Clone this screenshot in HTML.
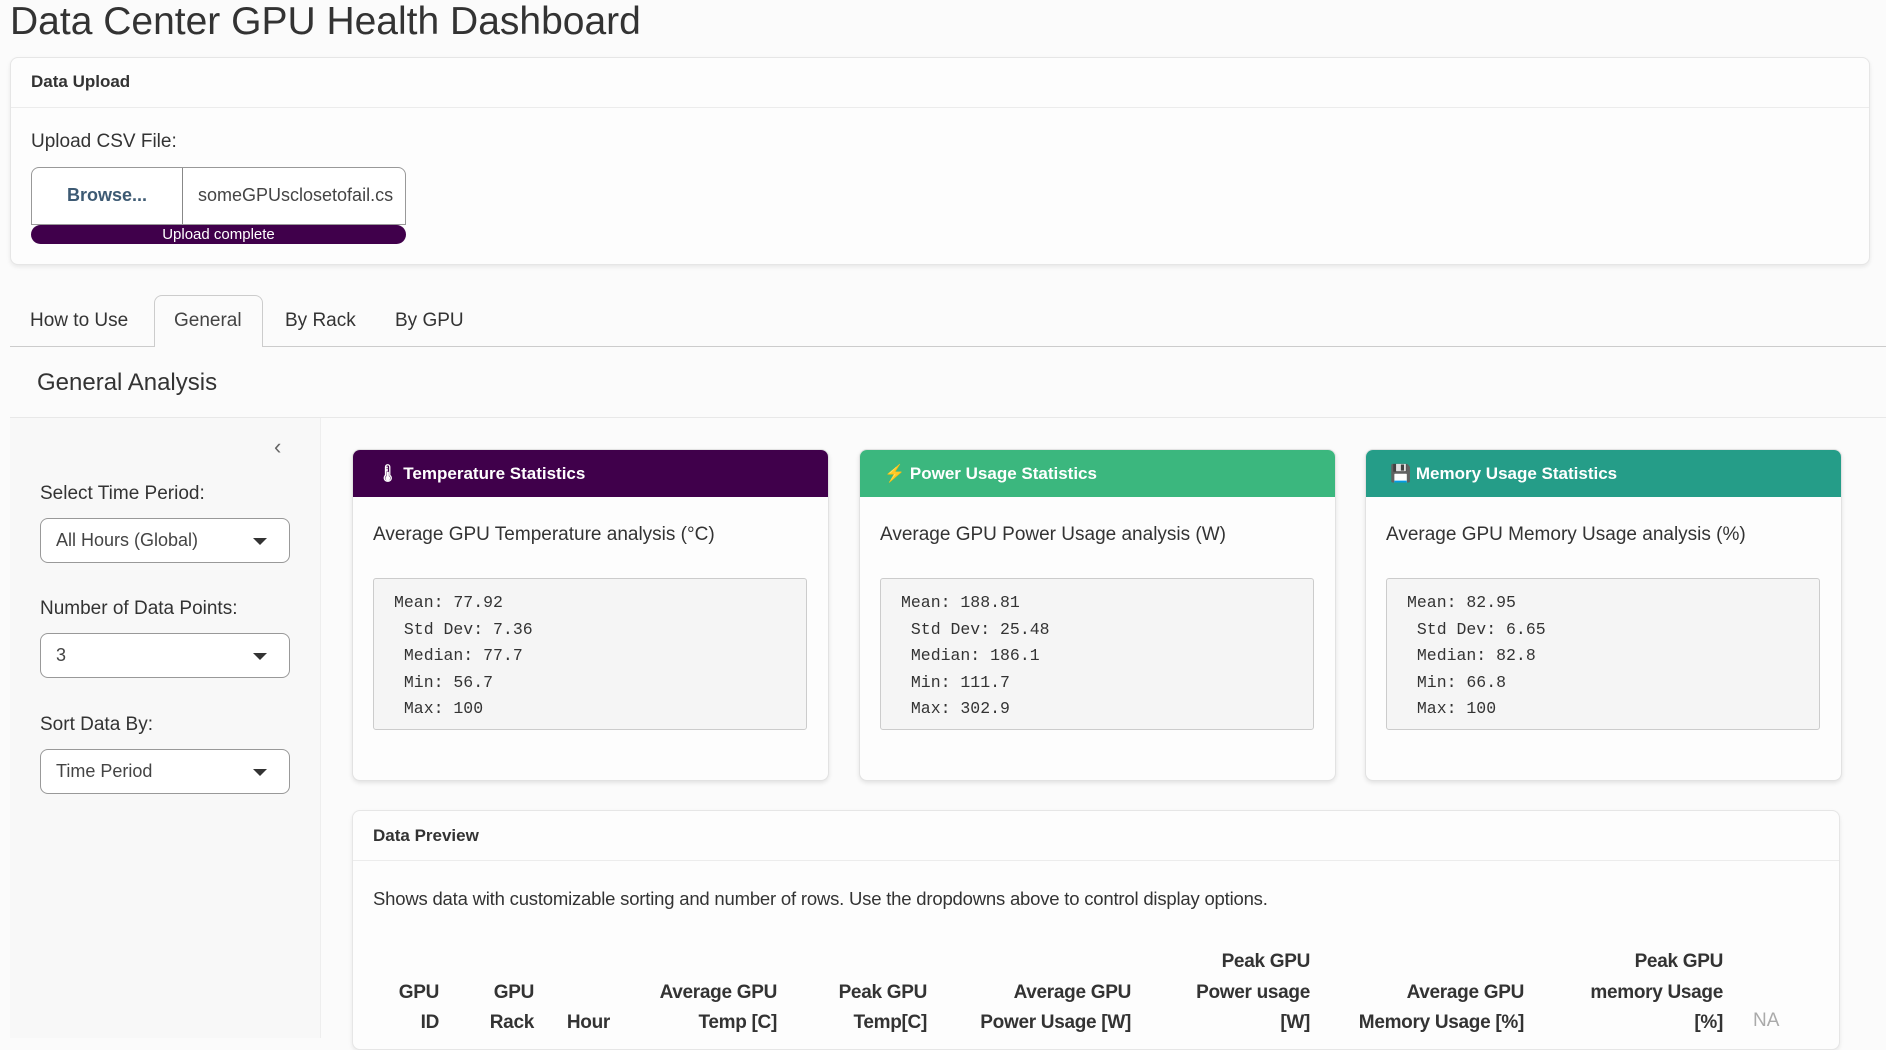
<!DOCTYPE html>
<html><head><meta charset="utf-8"><style>
*{box-sizing:border-box;margin:0;padding:0}
body{width:1886px;height:1036px;overflow:hidden;background:#fbfbfb;font-family:"Liberation Sans",sans-serif;color:#333;position:relative}
.a{position:absolute;white-space:nowrap}
.card{position:absolute;background:#fdfdfd;border:1px solid #e6e6e6;border-radius:8px;box-shadow:0 2px 4px rgba(0,0,0,.08)}
.sel{position:absolute;left:40px;width:250px;height:45px;border:1px solid #999;border-radius:8px;background:#fff;font-size:18px;padding:11px 0 0 15px;color:#444}
.sel:after{content:"";position:absolute;right:22px;top:19px;border-left:7px solid transparent;border-right:7px solid transparent;border-top:7px solid #333}
.lbl{font-size:19px;color:#333}
.st{position:absolute;width:477px;height:332px;background:#fdfdfd;border:1px solid #e2e2e2;border-radius:8px;box-shadow:0 2px 4px rgba(0,0,0,.1);overflow:hidden}
.st .h{height:47px;color:#fff;font-weight:bold;font-size:17px;padding:14px 0 0 24px}
.st .sub{position:absolute;left:20px;top:74px;font-size:19px;color:#333}
.st pre{position:absolute;left:20px;top:128px;width:434px;height:152px;background:#f5f5f5;border:1px solid #ccc;border-radius:3px;font-family:"Liberation Mono",monospace;font-size:16.5px;line-height:26.5px;padding:11px 20px;color:#333}
.th{position:absolute;font-weight:bold;font-size:19px;color:#333;text-align:right;line-height:30.5px;top:947px;letter-spacing:-0.3px}
</style></head><body>
<div class="a" style="left:10px;top:0px;font-size:39px;color:#333">Data Center GPU Health Dashboard</div>

<div class="card" style="left:10px;top:57px;width:1860px;height:208px">
 <div class="a" style="left:20px;top:14px;font-size:17px;font-weight:bold">Data Upload</div>
 <div style="position:absolute;left:0;right:0;top:49px;border-top:1px solid #ececec"></div>
 <div class="a" style="left:20px;top:73px;font-size:19px">Upload CSV File:</div>
 <div style="position:absolute;left:20px;top:109px;width:375px;height:58px;border:1px solid #999;border-radius:8px 8px 0 0;background:#fff">
  <div style="position:absolute;left:0;top:0;width:151px;height:56px;border-right:1px solid #888;font-weight:bold;font-size:18px;color:#3d5a73;text-align:center;padding-top:17px">Browse...</div>
  <div class="a" style="left:166px;top:17px;font-size:18px;color:#444">someGPUsclosetofail.cs</div>
 </div>
 <div style="position:absolute;left:20px;top:167px;width:375px;height:19px;background:#40004b;border-radius:10px;color:#fff;font-size:15px;text-align:center;line-height:19px">Upload complete</div>
</div>

<div style="position:absolute;left:10px;right:0;top:346px;border-top:1px solid #ccc"></div>
<div style="position:absolute;left:154px;top:295px;width:109px;height:52px;border:1px solid #ccc;border-bottom:none;border-radius:8px 8px 0 0;background:#fbfbfb"></div>
<div class="a" style="left:30px;top:310px;font-size:19px;color:#333">How to Use</div>
<div class="a" style="left:174px;top:310px;font-size:19px;color:#444">General</div>
<div class="a" style="left:285px;top:310px;font-size:19px;color:#333">By Rack</div>
<div class="a" style="left:395px;top:310px;font-size:19px;color:#333">By GPU</div>

<div class="a" style="left:37px;top:369px;font-size:24px;color:#333">General Analysis</div>
<div style="position:absolute;left:10px;right:0;top:417px;border-top:1px solid #e8e8e8"></div>

<div style="position:absolute;left:10px;top:418px;width:311px;height:620px;background:#f8f8f8;border-right:1px solid #eee"></div>
<div class="a" style="left:274px;top:434px;font-size:22px;color:#666">&#8249;</div>
<div class="a lbl" style="left:40px;top:483px">Select Time Period:</div>
<div class="sel" style="top:518px">All Hours (Global)</div>
<div class="a lbl" style="left:40px;top:598px">Number of Data Points:</div>
<div class="sel" style="top:633px">3</div>
<div class="a lbl" style="left:40px;top:714px">Sort Data By:</div>
<div class="sel" style="top:749px">Time Period</div>

<div class="st" style="left:352px;top:449px"><div class="h" style="background:#40004b">🌡 Temperature Statistics</div>
<div class="sub">Average GPU Temperature analysis (°C)</div>
<pre>Mean: 77.92
 Std Dev: 7.36
 Median: 77.7
 Min: 56.7
 Max: 100</pre></div>
<div class="st" style="left:859px;top:449px"><div class="h" style="background:#3bb77e">⚡ Power Usage Statistics</div>
<div class="sub">Average GPU Power Usage analysis (W)</div>
<pre>Mean: 188.81
 Std Dev: 25.48
 Median: 186.1
 Min: 111.7
 Max: 302.9</pre></div>
<div class="st" style="left:1365px;top:449px"><div class="h" style="background:#259d88">💾 Memory Usage Statistics</div>
<div class="sub">Average GPU Memory Usage analysis (%)</div>
<pre>Mean: 82.95
 Std Dev: 6.65
 Median: 82.8
 Min: 66.8
 Max: 100</pre></div>

<div class="card" style="left:352px;top:810px;width:1488px;height:240px">
 <div class="a" style="left:20px;top:15px;font-size:17px;font-weight:bold">Data Preview</div>
 <div style="position:absolute;left:0;right:0;top:49px;border-top:1px solid #ececec"></div>
 <div class="a" style="left:20px;top:77px;font-size:18.5px;letter-spacing:-0.2px">Shows data with customizable sorting and number of rows. Use the dropdowns above to control display options.</div>
</div>

<div class="th" style="right:1447px"><br>GPU<br>ID</div>
<div class="th" style="right:1352px"><br>GPU<br>Rack</div>
<div class="th" style="right:1276px"><br><br>Hour</div>
<div class="th" style="right:1109px"><br>Average GPU<br>Temp [C]</div>
<div class="th" style="right:959px"><br>Peak GPU<br>Temp[C]</div>
<div class="th" style="right:755px"><br>Average GPU<br>Power Usage [W]</div>
<div class="th" style="right:576px">Peak GPU<br>Power usage<br>[W]</div>
<div class="th" style="right:362px"><br>Average GPU<br>Memory Usage [%]</div>
<div class="th" style="right:163px">Peak GPU<br>memory Usage<br>[%]</div>
<div class="a" style="left:1753px;top:1010px;font-size:19px;color:#aaa">NA</div>
</body></html>
